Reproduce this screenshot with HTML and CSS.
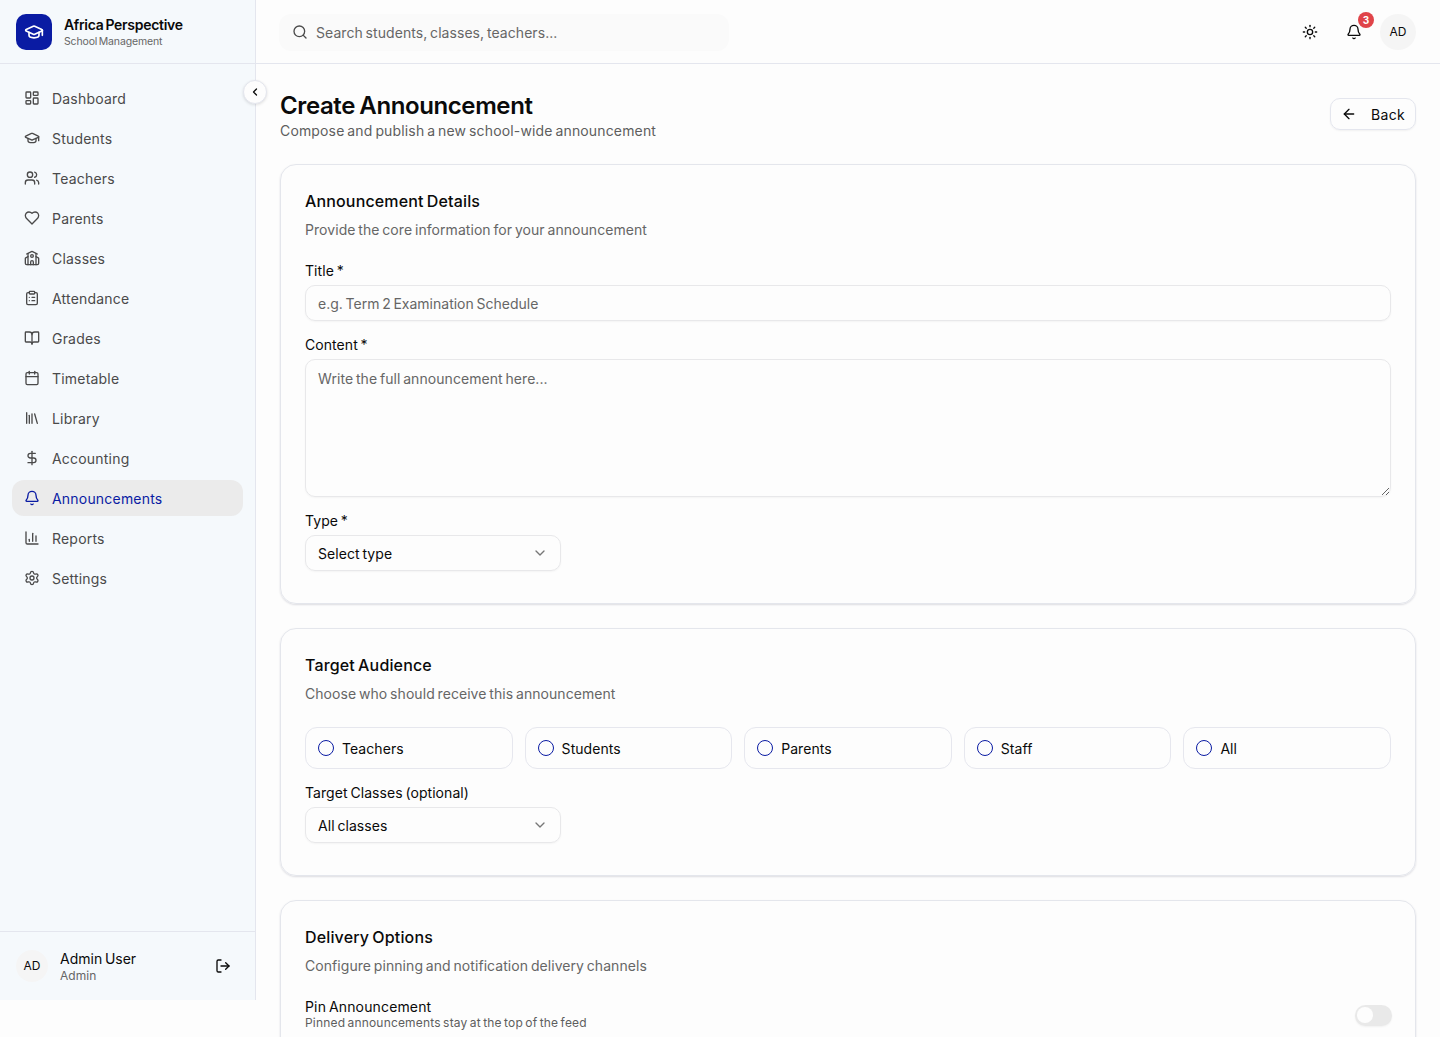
FILE: index.html
```
<!DOCTYPE html>
<html lang="en">
<head>
    <meta charset="UTF-8">
    <meta name="viewport" content="width=device-width, initial-scale=1.0">
    <title>Create Announcement - Africa Perspective</title>
    <link rel="stylesheet" href="styles.css">
</head>
<body>
    <div class="app">
        <aside class="sidebar">
            <div class="brand">
                <div class="brand-logo">
                    <svg class="icon icon-lg" viewBox="0 0 24 24"><path d="M21.42 10.922a1 1 0 0 0-.019-1.838L12.83 5.18a2 2 0 0 0-1.66 0L2.6 9.08a1 1 0 0 0 0 1.832l8.57 3.908a2 2 0 0 0 1.66 0z"/><path d="M22 10v6"/><path d="M6 12.5V16a6 3 0 0 0 12 0v-3.5"/></svg>
                </div>
                <div class="brand-text">
                    <div class="brand-name">Africa Perspective</div>
                    <div class="brand-sub">School Management</div>
                </div>
            </div>
            <button class="collapse-btn" aria-label="Collapse sidebar">
                <svg class="icon icon-sm" viewBox="0 0 24 24"><path d="m15 18-6-6 6-6"/></svg>
            </button>
            <nav class="nav">
                <a class="nav-item">
                    <svg class="icon" viewBox="0 0 24 24"><rect width="7" height="9" x="3" y="3" rx="1"/><rect width="7" height="5" x="14" y="3" rx="1"/><rect width="7" height="9" x="14" y="12" rx="1"/><rect width="7" height="5" x="3" y="16" rx="1"/></svg>
                    <span>Dashboard</span>
                </a>
                <a class="nav-item">
                    <svg class="icon" viewBox="0 0 24 24"><path d="M21.42 10.922a1 1 0 0 0-.019-1.838L12.83 5.18a2 2 0 0 0-1.66 0L2.6 9.08a1 1 0 0 0 0 1.832l8.57 3.908a2 2 0 0 0 1.66 0z"/><path d="M22 10v6"/><path d="M6 12.5V16a6 3 0 0 0 12 0v-3.5"/></svg>
                    <span>Students</span>
                </a>
                <a class="nav-item">
                    <svg class="icon" viewBox="0 0 24 24"><path d="M16 21v-2a4 4 0 0 0-4-4H6a4 4 0 0 0-4 4v2"/><circle cx="9" cy="7" r="4"/><path d="M22 21v-2a4 4 0 0 0-3-3.87"/><path d="M16 3.13a4 4 0 0 1 0 7.75"/></svg>
                    <span>Teachers</span>
                </a>
                <a class="nav-item">
                    <svg class="icon" viewBox="0 0 24 24"><path d="M19 14c1.49-1.46 3-3.21 3-5.5A5.5 5.5 0 0 0 16.5 3c-1.76 0-3 .5-4.5 2-1.5-1.5-2.74-2-4.5-2A5.5 5.5 0 0 0 2 8.5c0 2.3 1.5 4.05 3 5.5l7 7Z"/></svg>
                    <span>Parents</span>
                </a>
                <a class="nav-item">
                    <svg class="icon" viewBox="0 0 24 24"><path d="M14 22v-4a2 2 0 1 0-4 0v4"/><path d="m18 10 3.447 1.724a1 1 0 0 1 .553.894V20a2 2 0 0 1-2 2H4a2 2 0 0 1-2-2v-7.382a1 1 0 0 1 .553-.894L6 10"/><path d="M18 5v17"/><path d="m4 6 7.106-3.553a2 2 0 0 1 1.788 0L20 6"/><path d="M6 5v17"/><circle cx="12" cy="9" r="2"/></svg>
                    <span>Classes</span>
                </a>
                <a class="nav-item">
                    <svg class="icon" viewBox="0 0 24 24"><rect width="8" height="4" x="8" y="2" rx="1"/><path d="M16 4h2a2 2 0 0 1 2 2v14a2 2 0 0 1-2 2H6a2 2 0 0 1-2-2V6a2 2 0 0 1 2-2h2"/><path d="M12 11h4"/><path d="M12 16h4"/><path d="M8 11h.01"/><path d="M8 16h.01"/></svg>
                    <span>Attendance</span>
                </a>
                <a class="nav-item">
                    <svg class="icon" viewBox="0 0 24 24"><path d="M12 7v14"/><path d="M3 18a1 1 0 0 1-1-1V4a1 1 0 0 1 1-1h5a4 4 0 0 1 4 4 4 4 0 0 1 4-4h5a1 1 0 0 1 1 1v13a1 1 0 0 1-1 1h-6a3 3 0 0 0-3 3 3 3 0 0 0-3-3z"/></svg>
                    <span>Grades</span>
                </a>
                <a class="nav-item">
                    <svg class="icon" viewBox="0 0 24 24"><path d="M8 2v4"/><path d="M16 2v4"/><rect width="18" height="18" x="3" y="4" rx="2"/><path d="M3 10h18"/></svg>
                    <span>Timetable</span>
                </a>
                <a class="nav-item">
                    <svg class="icon" viewBox="0 0 24 24"><path d="m16 6 4 14"/><path d="M12 6v14"/><path d="M8 8v12"/><path d="M4 4v16"/></svg>
                    <span>Library</span>
                </a>
                <a class="nav-item">
                    <svg class="icon" viewBox="0 0 24 24"><path d="M12 2v20"/><path d="M17 5H9.5a3.5 3.5 0 0 0 0 7h5a3.5 3.5 0 0 1 0 7H6"/></svg>
                    <span>Accounting</span>
                </a>
                <a class="nav-item active">
                    <svg class="icon" viewBox="0 0 24 24"><path d="M10.268 21a2 2 0 0 0 3.464 0"/><path d="M3.262 15.326A1 1 0 0 0 4 17h16a1 1 0 0 0 .74-1.673C19.41 13.956 18 12.499 18 8A6 6 0 0 0 6 8c0 4.499-1.411 5.956-2.738 7.326"/></svg>
                    <span>Announcements</span>
                </a>
                <a class="nav-item">
                    <svg class="icon" viewBox="0 0 24 24"><path d="M3 3v16a2 2 0 0 0 2 2h16"/><path d="M18 17V9"/><path d="M13 17V5"/><path d="M8 17v-3"/></svg>
                    <span>Reports</span>
                </a>
                <a class="nav-item">
                    <svg class="icon" viewBox="0 0 24 24"><path d="M9.671 4.136a2.34 2.34 0 0 1 4.659 0 2.34 2.34 0 0 0 3.319 1.915 2.34 2.34 0 0 1 2.33 4.033 2.34 2.34 0 0 0 0 3.831 2.34 2.34 0 0 1-2.33 4.033 2.34 2.34 0 0 0-3.319 1.915 2.34 2.34 0 0 1-4.659 0 2.34 2.34 0 0 0-3.32-1.915 2.34 2.34 0 0 1-2.33-4.033 2.34 2.34 0 0 0 0-3.831A2.34 2.34 0 0 1 6.35 6.051a2.34 2.34 0 0 0 3.319-1.915"/><circle cx="12" cy="12" r="3"/></svg>
                    <span>Settings</span>
                </a>
            </nav>
            <div class="user">
                <div class="avatar">AD</div>
                <div class="user-info">
                    <div class="user-name">Admin User</div>
                    <div class="user-role">Admin</div>
                </div>
                <button class="icon-btn" aria-label="Log out">
                    <svg class="icon" viewBox="0 0 24 24"><path d="m16 17 5-5-5-5"/><path d="M21 12H9"/><path d="M9 21H5a2 2 0 0 1-2-2V5a2 2 0 0 1 2-2h4"/></svg>
                </button>
            </div>
        </aside>

        <div class="main">
            <header class="topbar">
                <label class="search">
                    <svg class="icon" viewBox="0 0 24 24"><circle cx="11" cy="11" r="8"/><path d="m21 21-4.3-4.3"/></svg>
                    <input type="text" placeholder="Search students, classes, teachers...">
                </label>
                <div class="topbar-actions">
                    <button class="icon-btn" aria-label="Toggle theme">
                        <svg class="icon" viewBox="0 0 24 24"><circle cx="12" cy="12" r="4"/><path d="M12 2v2"/><path d="M12 20v2"/><path d="m4.93 4.93 1.41 1.41"/><path d="m17.66 17.66 1.41 1.41"/><path d="M2 12h2"/><path d="M20 12h2"/><path d="m6.34 17.66-1.41 1.41"/><path d="m19.07 4.93-1.41 1.41"/></svg>
                    </button>
                    <button class="icon-btn" aria-label="Notifications">
                        <svg class="icon" viewBox="0 0 24 24"><path d="M10.268 21a2 2 0 0 0 3.464 0"/><path d="M3.262 15.326A1 1 0 0 0 4 17h16a1 1 0 0 0 .74-1.673C19.41 13.956 18 12.499 18 8A6 6 0 0 0 6 8c0 4.499-1.411 5.956-2.738 7.326"/></svg>
                        <span class="badge">3</span>
                    </button>
                    <div class="avatar avatar-lg">AD</div>
                </div>
            </header>

            <main class="content">
                <div class="page-header">
                    <div class="page-title">
                        <h1>Create Announcement</h1>
                        <p class="page-sub">Compose and publish a new school-wide announcement</p>
                    </div>
                    <button class="back-btn">
                        <svg class="icon" viewBox="0 0 24 24"><path d="m12 19-7-7 7-7"/><path d="M19 12H5"/></svg>
                        <span>Back</span>
                    </button>
                </div>

                <section class="card">
                    <h2>Announcement Details</h2>
                    <p class="card-desc">Provide the core information for your announcement</p>
                    <div class="fields">
                        <div class="field">
                            <label for="title">Title *</label>
                            <input class="input" id="title" type="text" placeholder="e.g. Term 2 Examination Schedule">
                        </div>
                        <div class="field">
                            <label for="content">Content *</label>
                            <textarea class="input" id="content" placeholder="Write the full announcement here..."></textarea>
                        </div>
                        <div class="field">
                            <label>Type *</label>
                            <button class="select">
                                <span>Select type</span>
                                <svg class="icon" viewBox="0 0 24 24"><path d="m6 9 6 6 6-6"/></svg>
                            </button>
                        </div>
                    </div>
                </section>

                <section class="card">
                    <h2>Target Audience</h2>
                    <p class="card-desc">Choose who should receive this announcement</p>
                    <div class="fields">
                        <div class="audience">
                            <label class="option"><span class="radio"></span>Teachers</label>
                            <label class="option"><span class="radio"></span>Students</label>
                            <label class="option"><span class="radio"></span>Parents</label>
                            <label class="option"><span class="radio"></span>Staff</label>
                            <label class="option"><span class="radio"></span>All</label>
                        </div>
                        <div class="field">
                            <label>Target Classes (optional)</label>
                            <button class="select">
                                <span>All classes</span>
                                <svg class="icon" viewBox="0 0 24 24"><path d="m6 9 6 6 6-6"/></svg>
                            </button>
                        </div>
                    </div>
                </section>

                <section class="card">
                    <h2>Delivery Options</h2>
                    <p class="card-desc">Configure pinning and notification delivery channels</p>
                    <div class="toggle-row">
                        <div>
                            <div class="toggle-title">Pin Announcement</div>
                            <div class="toggle-desc">Pinned announcements stay at the top of the feed</div>
                        </div>
                        <button class="switch" role="switch" aria-checked="false" aria-label="Pin announcement"><span class="thumb"></span></button>
                    </div>
                </section>
            </main>
        </div>
    </div>
</body>
</html>
```
FILE: styles.css
```
* {
    box-sizing: border-box;
}

body {
    margin: 0;
    height: 1037px;
    overflow: hidden;
    background-color: #fdfdfd;
    color: #0a0a0a;
    font-family: 'Inter', sans-serif;
    font-size: 14px;
    line-height: 20px;
    letter-spacing: 0.06px;
    word-spacing: -1.2px;
}

h1,
h2,
p {
    margin: 0;
}

button,
input,
textarea {
    font: inherit;
    letter-spacing: inherit;
    word-spacing: inherit;
    color: inherit;
}

button {
    padding: 0;
    border: none;
    background: none;
}

.icon {
    width: 16px;
    height: 16px;
    flex-shrink: 0;
    fill: none;
    stroke: currentColor;
    stroke-width: 2;
    stroke-linecap: round;
    stroke-linejoin: round;
}

.icon-lg {
    width: 20px;
    height: 20px;
}

.icon-sm {
    width: 12px;
    height: 12px;
    stroke-width: 2.5;
}

.app {
    display: flex;
    align-items: flex-start;
}

/* Sidebar */
.sidebar {
    position: relative;
    display: flex;
    flex-direction: column;
    flex-shrink: 0;
    width: 256px;
    height: 1000px;
    background-color: #f5f9fc;
    border-right: 1px solid #e4e6ee;
}

.brand {
    display: flex;
    align-items: center;
    gap: 12px;
    height: 64px;
    padding: 0 16px;
    border-bottom: 1px solid #e4e6ee;
}

.brand-logo {
    display: flex;
    align-items: center;
    justify-content: center;
    width: 36px;
    height: 36px;
    border-radius: 10px;
    background-color: #0a1ba3;
    color: #fff;
}

.brand-text {
    padding-top: 2px;
}

.brand-name {
    font-size: 14px;
    font-weight: 600;
    line-height: 18px;
    letter-spacing: -0.3px;
}

.brand-sub {
    font-size: 10.5px;
    line-height: 15px;
    letter-spacing: -0.15px;
    color: #666;
}

.collapse-btn {
    position: absolute;
    top: 80px;
    right: -12px;
    display: flex;
    align-items: center;
    justify-content: center;
    width: 24px;
    height: 24px;
    border: 1px solid #e4e6ee;
    border-radius: 50%;
    background-color: #fdfdfd;
    box-shadow: 0 1px 3px rgba(0, 0, 0, 0.12);
}

.nav {
    display: flex;
    flex-direction: column;
    flex: 1;
    gap: 4px;
    padding: 16px 12px;
}

.nav-item {
    display: flex;
    align-items: center;
    gap: 12px;
    height: 36px;
    padding: 0 12px;
    border-radius: 12px;
    color: #4a4a4a;
    letter-spacing: 0.2px;
}

.nav-item span {
    padding-top: 2px;
}

.nav-item.active {
    background-color: #ebebeb;
    color: #0a1ba3;
}

.user {
    display: flex;
    align-items: center;
    gap: 12px;
    height: 69px;
    padding: 0 16px;
    border-top: 1px solid #e4e6ee;
}

.avatar {
    display: flex;
    align-items: center;
    justify-content: center;
    width: 32px;
    height: 32px;
    border-radius: 50%;
    background-color: #f5f5f5;
    font-size: 12px;
}

.avatar-lg {
    width: 36px;
    height: 36px;
}

.user-info {
    flex: 1;
    padding-top: 2px;
}

.user-name {
    line-height: 18px;
    letter-spacing: 0;
}

.user-role {
    font-size: 12px;
    line-height: 16px;
    color: #666;
}

.icon-btn {
    position: relative;
    display: flex;
    align-items: center;
    justify-content: center;
    width: 32px;
    height: 36px;
}

/* Top bar */
.main {
    flex: 1;
    min-width: 0;
}

.topbar {
    display: flex;
    align-items: center;
    justify-content: space-between;
    height: 64px;
    padding: 0 24px 0 23px;
    border-bottom: 1px solid #e4e6ee;
}

.search {
    display: flex;
    align-items: center;
    gap: 8px;
    width: 450px;
    height: 37px;
    margin-top: 1px;
    padding: 0 13px 1px;
    border-radius: 12px;
    background-color: #fafafa;
    color: #4a4a4a;
}

.search input {
    flex: 1;
    padding: 2px 0 0;
    border: none;
    outline: none;
    background: none;
}

input::placeholder,
textarea::placeholder {
    color: #666;
    opacity: 1;
}

.topbar-actions {
    display: flex;
    align-items: center;
    gap: 8px;
}

.topbar-actions .icon-btn {
    width: 36px;
}

.badge {
    position: absolute;
    top: -2px;
    right: -2px;
    width: 16px;
    height: 16px;
    border-radius: 50%;
    background-color: #e04449;
    color: #fff;
    font-size: 10px;
    font-weight: 700;
    line-height: 16px;
    text-align: center;
}

/* Page */
.content {
    display: flex;
    flex-direction: column;
    gap: 24px;
    padding: 24px;
}

.page-header {
    display: flex;
    align-items: center;
    justify-content: space-between;
    height: 52px;
}

.page-title {
    padding-top: 3px;
}

h1 {
    font-size: 24px;
    font-weight: 600;
    line-height: 31px;
    letter-spacing: -0.4px;
}

.page-sub {
    letter-spacing: 0.15px;
    color: #5e5e5e;
}

.back-btn {
    display: flex;
    align-items: center;
    gap: 14px;
    height: 32px;
    padding: 0 10px;
    border: 1px solid #e4e6ee;
    border-radius: 10px;
    box-shadow: 0 1px 2px rgba(0, 0, 0, 0.05);
    letter-spacing: 0.3px;
}

.back-btn span {
    padding-top: 1px;
}

.card {
    padding: 24px 24px 32px;
    border: 1px solid #e4e6ec;
    border-radius: 16px;
    box-shadow: 0 1px 2px rgba(20, 20, 60, 0.14);
}

h2 {
    font-size: 16px;
    font-weight: 500;
    line-height: 24px;
    letter-spacing: 0.15px;
}

.card-desc {
    margin: 7px 0 23px;
    color: #666;
}

.fields {
    display: flex;
    flex-direction: column;
    gap: 16px;
}

.field {
    display: flex;
    flex-direction: column;
    gap: 6px;
}

.field label {
    line-height: 16px;
}

.input,
.select {
    border: 1px solid #e8e8ea;
    border-radius: 10px;
    outline: none;
    background: none;
    box-shadow: 0 1px 2px rgba(0, 0, 0, 0.04);
}

.input {
    display: block;
    width: 100%;
    height: 36px;
    padding: 1px 12px 0;
    letter-spacing: 0;
}

textarea.input {
    height: 138px;
    padding: 9px 12px;
    letter-spacing: 0.06px;
    resize: vertical;
}

.select {
    display: flex;
    align-items: center;
    justify-content: space-between;
    width: 256px;
    height: 36px;
    padding: 0 12px;
}

.select span {
    padding-top: 2px;
}

.select .icon {
    color: #777;
}

.audience {
    display: grid;
    grid-template-columns: repeat(5, 1fr);
    gap: 12px;
}

.option {
    display: flex;
    align-items: center;
    gap: 8px;
    height: 42px;
    padding: 2px 12px 0;
    border: 1px solid #e6e7ee;
    border-radius: 12px;
}

.radio {
    width: 16px;
    height: 16px;
    margin-top: -2px;
    border: 1px solid #0a1ba3;
    border-radius: 50%;
}

.toggle-row {
    display: flex;
    align-items: center;
    justify-content: space-between;
}

.toggle-title {
    line-height: 16px;
    letter-spacing: 0.15px;
}

.toggle-desc {
    font-size: 12px;
    line-height: 16px;
    letter-spacing: 0.18px;
    color: #5e5e5e;
}

.switch {
    display: flex;
    align-items: center;
    width: 37px;
    height: 21px;
    margin-right: -1px;
    padding: 0 2px;
    border-radius: 11px;
    background-color: #e9e9e9;
    box-shadow: 0 1px 2px rgba(0, 0, 0, 0.05);
}

.thumb {
    width: 16px;
    height: 16px;
    border-radius: 50%;
    background-color: #fdfdfd;
}
```
